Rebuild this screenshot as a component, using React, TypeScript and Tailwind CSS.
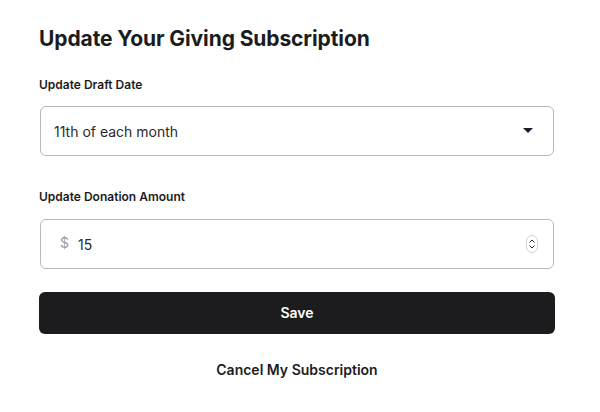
import React from 'react';

export default function App() {
  return (
    <main
      className="min-h-[412px] bg-white text-[#1c1c1e]"
      style={{ fontFamily: 'Inter, "Noto Sans", sans-serif' }}
    >
      <div className="w-[516px] ml-[39px] pt-[26px]">
        {/* Title */}
        <h1 className="text-[21px] leading-[25px] font-bold tracking-[-0.1px]">
          Update Your Giving Subscription
        </h1>

        {/* Draft date */}
        <label className="block mt-[26px] text-[12px] leading-[16px] font-semibold">
          Update Draft Date
        </label>
        <div className="mx-px mt-[13px] h-[50px] flex items-center justify-between border border-[#b4b8c0] rounded-[6px] pl-[13px] pr-[20px]">
          <span className="text-[14px] text-[#2a2a2c]">11th of each month</span>
          <svg width="10" height="6" viewBox="0 0 10 6">
            <path d="M0 0 L10 0 L5 5 Z" fill="#1c1c2e" />
          </svg>
        </div>

        {/* Donation amount */}
        <label className="block mt-[33px] text-[12px] leading-[16px] font-semibold">
          Update Donation Amount
        </label>
        <div className="mx-px mt-[14px] h-[50px] flex items-center justify-between border border-[#b4b8c0] rounded-[6px] pl-[19px] pr-[15px]">
          <div className="flex items-center">
            <span className="text-[14px] text-[#9a9ca3] -mt-[3px]">$</span>
            <span className="ml-[9px] text-[14px] text-[#2a2a2c]">15</span>
          </div>
          <div className="w-[12px] h-[18px] rounded-[6px] border border-[#d4d6da] flex flex-col items-center justify-center gap-[2px]">
            <svg width="6" height="4" viewBox="0 0 6 4">
              <path d="M0.5 3.5 L3 1 L5.5 3.5" stroke="#333" strokeWidth="1" fill="none" />
            </svg>
            <svg width="6" height="4" viewBox="0 0 6 4">
              <path d="M0.5 0.5 L3 3 L5.5 0.5" stroke="#333" strokeWidth="1" fill="none" />
            </svg>
          </div>
        </div>

        {/* Actions */}
        <button className="block mt-[23px] w-full h-[42px] bg-[#1c1c1e] rounded-[6px] text-white text-[14px] leading-[20px] font-semibold pb-px">
          Save
        </button>
        <div className="mt-[25px] text-center text-[14px] font-semibold">
          Cancel My Subscription
        </div>
      </div>
    </main>
  );
}
